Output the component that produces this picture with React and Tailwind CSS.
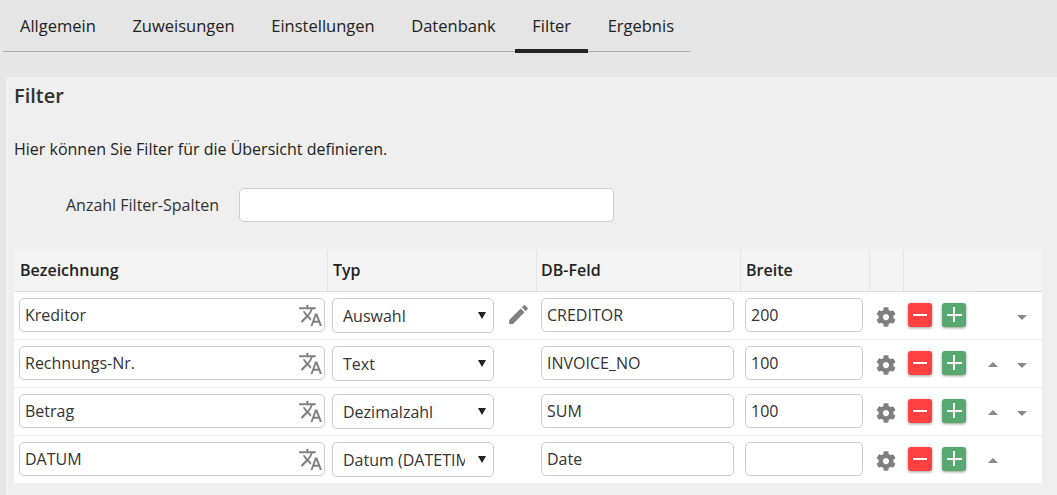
import React from "react";
import { MdTranslate, MdEdit, MdArrowDropUp, MdArrowDropDown } from "react-icons/md";
import { FaCog } from "react-icons/fa";

const tabs = ["Allgemein", "Zuweisungen", "Einstellungen", "Datenbank", "Filter", "Ergebnis"];

const rows = [
  { name: "Kreditor", type: "Auswahl", db: "CREDITOR", width: "200", edit: true, up: false, down: true },
  { name: "Rechnungs-Nr.", type: "Text", db: "INVOICE_NO", width: "100", edit: false, up: true, down: true },
  { name: "Betrag", type: "Dezimalzahl", db: "SUM", width: "100", edit: false, up: true, down: true },
  { name: "DATUM", type: "Datum (DATETIME)", db: "Date", width: "", edit: false, up: true, down: false },
];

const cols = "grid grid-cols-[314px_209px_204px_129px_34px_72px_66px]";
const inputCls =
  "h-[34px] rounded-[5px] border border-[#cccccc] bg-white px-[5px] text-[16px] text-[#333333] outline-none";

function Head({ children, pad = "pl-[4px]" }) {
  return (
    <div className={`flex h-[42px] items-center border-r border-[#e6e6e6] ${pad} text-[16px] font-semibold text-[#222222]`}>
      {children}
    </div>
  );
}

function Row({ row, last }) {
  return (
    <div className={`${cols} bg-white ${last ? "h-[47px]" : "h-[48px] border-b border-[#e8e8e8]"}`}>
      <div className="pl-[5px] pt-[6px]">
        <div className={`${inputCls} relative flex w-[306px] items-center pr-[30px]`}>
          <input readOnly value={row.name} className="w-full bg-transparent outline-none" />
          <MdTranslate className="absolute right-[1px] top-[4px] h-[25px] w-[25px] text-[#808080]" />
        </div>
      </div>
      <div className="flex items-start pl-[4px] pt-[6px]">
        <div className="relative h-[35px] w-[162px]">
          <select
            defaultValue={row.type}
            className="h-[35px] w-[162px] appearance-none rounded-[5px] border border-[#cccccc] bg-white pl-[10px] pr-[28px] text-[16px] text-[#333333] outline-none"
          >
            <option>{row.type}</option>
          </select>
          <svg viewBox="0 0 8 7" className="pointer-events-none absolute left-[146px] top-[14px] h-[7px] w-[8px]">
            <path d="M0 0H8L4 7Z" fill="#222222" />
          </svg>
        </div>
        {row.edit && <MdEdit className="ml-[12px] mt-[4px] h-[25px] w-[25px] text-[#808080]" />}
      </div>
      <div className="pl-[4px] pt-[6px]">
        <input readOnly value={row.db} className={`${inputCls} w-[193px]`} />
      </div>
      <div className="pl-[4px] pt-[6px]">
        <input readOnly value={row.width} className={`${inputCls} w-[118px]`} />
      </div>
      <div className="flex items-start justify-center pr-[2px] pt-[15px]">
        <FaCog className="h-[20px] w-[20px] text-[#808080]" />
      </div>
      <div className="flex items-start gap-[10px] pl-[4px] pt-[11px]">
        <button className="flex h-[24px] w-[24px] shrink-0 items-center justify-center rounded-[3px] bg-[#ff4040] shadow-[0_1px_3px_rgba(0,0,0,0.4)]">
          <span className="h-[2px] w-[14px] bg-white" />
        </button>
        <button className="relative flex h-[24px] w-[24px] shrink-0 items-center justify-center rounded-[3px] bg-[#57a96f] shadow-[0_1px_3px_rgba(0,0,0,0.4)]">
          <span className="h-[2px] w-[15px] bg-white" />
          <span className="absolute left-[11px] top-[4px] h-[15px] w-[2px] bg-white" />
        </button>
      </div>
      <div className="flex items-start pt-[13px] text-[#888888]">
        <span className="w-[34px] pl-[5px]">
          {row.up && <MdArrowDropUp className="h-[24px] w-[24px]" />}
        </span>
        <span className="w-[30px]">
          {row.down && <MdArrowDropDown className="h-[24px] w-[24px]" />}
        </span>
      </div>
    </div>
  );
}

export default function App() {
  return (
    <div className="h-[495px] w-[1057px] overflow-hidden bg-[#e5e5e5] font-['Open_Sans',sans-serif] text-[#222222]">
      <div className="ml-[3px] flex h-[52px] w-[687px] border-b border-[#aaaaaa]">
        {tabs.map((t, i) => (
          <div
            key={t}
            className={`relative flex h-[52px] items-center pt-[1px] text-[16.5px] font-medium text-[#222222] ${i === 0 ? "pl-[17px] pr-[18.3px]" : "px-[18.3px]"}`}
          >
            {t}
            {i === 4 && <span className="absolute inset-x-[1px] bottom-[-1px] h-[4px] bg-[#222222]" />}
          </div>
        ))}
      </div>
      <div className="ml-[6px] mt-[25px] h-[418px] rounded-tl-[3px] bg-[#efefef] pl-[8px] pr-[15px]">
        <h1 className="pt-[5px] text-[20px] font-semibold leading-[28px] text-[#333333]">Filter</h1>
        <p className="mt-[28px] text-[16px] leading-[22px] text-[#222222]">
          Hier können Sie Filter für die Übersicht definieren.
        </p>
        <div className="mt-[28px] flex h-[34px] items-center">
          <label className="w-[225px] pr-[20px] text-right text-[16px] text-[#333333]">Anzahl Filter-Spalten</label>
          <input readOnly className="h-[34px] w-[375px] rounded-[5px] border border-[#cccccc] bg-white outline-none" />
        </div>
        <div className="mt-[27px] w-[1028px]">
          <div className={`${cols} h-[43px] border-b border-[#e0e0e0] bg-[#f4f4f4]`}>
            <Head pad="pl-[6px]">Bezeichnung</Head>
            <Head pad="pl-[5px]">Typ</Head>
            <Head>DB-Feld</Head>
            <Head pad="pl-[5px]">Breite</Head>
            <Head />
            <div />
            <div className="h-[43px] border-b border-[#d0d0d0]" />
          </div>
          {rows.map((r, i) => (
            <Row key={r.name} row={r} last={i === rows.length - 1} />
          ))}
        </div>
      </div>
    </div>
  );
}
